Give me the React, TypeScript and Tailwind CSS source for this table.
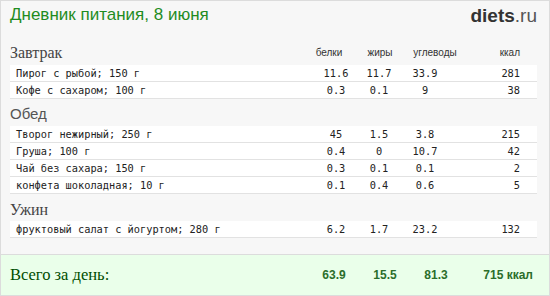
import React from 'react';

type Item = { name: string; p: string; f: string; c: string; k: string };

const breakfast: Item[] = [
  { name: 'Пирог с рыбой; 150 г', p: '11.6', f: '11.7', c: '33.9', k: '281' },
  { name: 'Кофе с сахаром; 100 г', p: '0.3', f: '0.1', c: '9', k: '38' },
];

const lunch: Item[] = [
  { name: 'Творог нежирный; 250 г', p: '45', f: '1.5', c: '3.8', k: '215' },
  { name: 'Груша; 100 г', p: '0.4', f: '0', c: '10.7', k: '42' },
  { name: 'Чай без сахара; 150 г', p: '0.3', f: '0.1', c: '0.1', k: '2' },
  { name: 'конфета шоколадная; 10 г', p: '0.1', f: '0.4', c: '0.6', k: '5' },
];

const dinner: Item[] = [
  { name: 'фруктовый салат с йогуртом; 280 г', p: '6.2', f: '1.7', c: '23.2', k: '132' },
];

const Row: React.FC<{ it: Item }> = ({ it }) => (
  <div className="grid grid-cols-[1fr_44px_42px_50px_70px] h-[17px] items-center bg-white border-b border-[#e2e2e2] pl-[6px] pr-[17px] font-['DejaVu_Sans_Mono',monospace] text-[10.3px] leading-none text-[#222]">
    <span>{it.name}</span>
    <span className="text-center">{it.p}</span>
    <span className="text-center">{it.f}</span>
    <span className="text-center">{it.c}</span>
    <span className="text-right">{it.k}</span>
  </div>
);

const App: React.FC = () => {
  return (
    <div className="w-[550px] h-[296px] border border-[#dcdcdc] bg-[#f7f7f7] flex flex-col overflow-hidden">
      {/* шапка */}
      <div className="h-[37px] flex items-start justify-between pl-[9px] pr-[12px] pt-[4px]">
        <h1 className="font-['Liberation_Sans',sans-serif] text-[17px] leading-[20px] text-[#1f8c1f]">
          Дневник питания, 8 июня
        </h1>
        <div className="font-['Liberation_Sans',sans-serif] text-[19px] leading-[20px] text-[#333] pt-[1px]">
          <span className="font-bold">diets</span>
          <span className="text-[#555]">.ru</span>
        </div>
      </div>

      <div className="pl-[9px] pr-[12px]">
        {/* Завтрак */}
        <div className="h-[27px] grid grid-cols-[1fr_44px_58px_52px_59px] items-end pr-[17px] pb-[4px]">
          <span className="font-['Liberation_Serif',serif] text-[16px] leading-none text-[#444]">Завтрак</span>
          <span className="text-center font-['Liberation_Sans',sans-serif] text-[10px] leading-none text-[#333] pb-[3px]">белки</span>
          <span className="text-center font-['Liberation_Sans',sans-serif] text-[10px] leading-none text-[#333] pb-[3px]">жиры</span>
          <span className="text-center font-['Liberation_Sans',sans-serif] text-[10px] leading-none text-[#333] pb-[3px]">углеводы</span>
          <span className="text-right font-['Liberation_Sans',sans-serif] text-[10px] leading-none text-[#333] pb-[3px]">ккал</span>
        </div>
        {breakfast.map((it) => (
          <Row key={it.name} it={it} />
        ))}

        {/* Обед */}
        <div className="h-[27px] flex items-end pb-[5px]">
          <span className="font-['Liberation_Sans',sans-serif] text-[15px] leading-none text-[#555]">Обед</span>
        </div>
        {lunch.map((it) => (
          <Row key={it.name} it={it} />
        ))}

        {/* Ужин */}
        <div className="h-[27px] flex items-end pb-[3px]">
          <span className="font-['Liberation_Serif',serif] text-[16px] leading-none text-[#444]">Ужин</span>
        </div>
        {dinner.map((it) => (
          <Row key={it.name} it={it} />
        ))}
      </div>

      <div className="flex-1" />

      {/* итого */}
      <div className="h-[41px] border-t border-[#dcdcdc] bg-[#eaffea] grid grid-cols-[1fr_44px_58px_44px_75px] items-center pl-[9px] pr-[16px]">
        <span className="font-['Liberation_Serif',serif] text-[16.5px] text-[#004d00]">Всего за день:</span>
        <span className="text-center font-['Liberation_Sans',sans-serif] font-bold text-[12px] text-[#2b6e2b]">63.9</span>
        <span className="text-center font-['Liberation_Sans',sans-serif] font-bold text-[12px] text-[#2b6e2b]">15.5</span>
        <span className="text-center font-['Liberation_Sans',sans-serif] font-bold text-[12px] text-[#2b6e2b]">81.3</span>
        <span className="text-right font-['Liberation_Sans',sans-serif] font-bold text-[12px] text-[#2b6e2b]">715 ккал</span>
      </div>
    </div>
  );
};

export default App;
